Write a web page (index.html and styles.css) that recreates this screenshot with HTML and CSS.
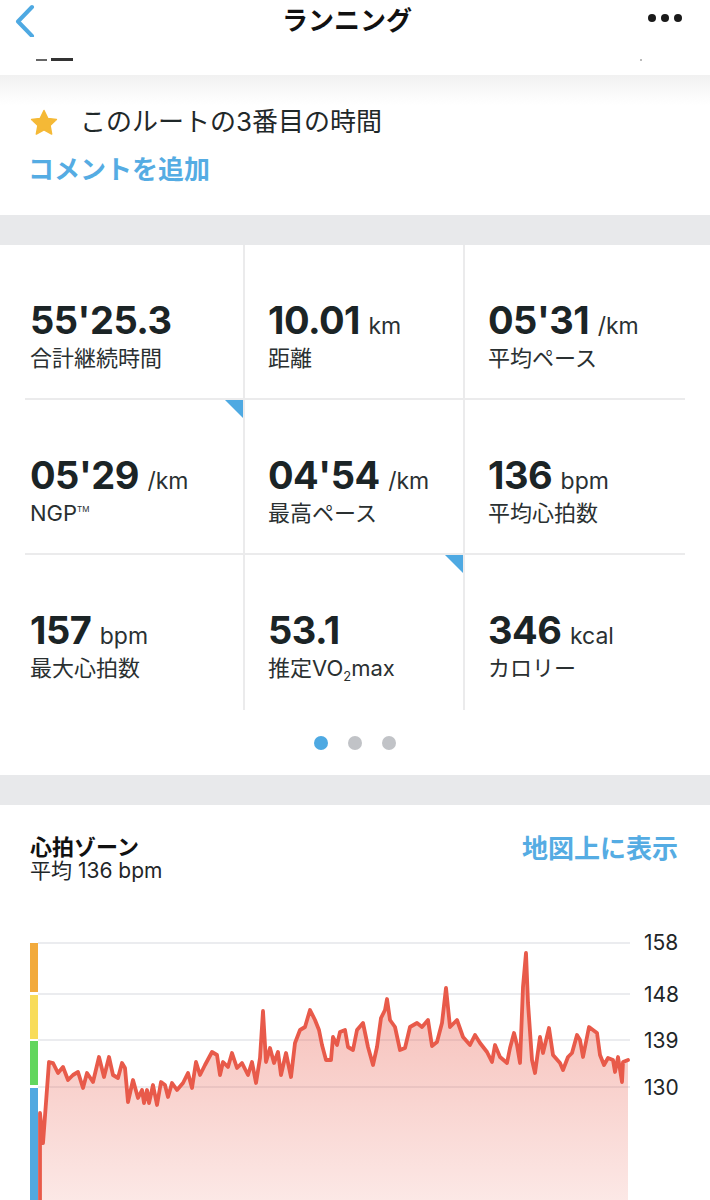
FILE: index.html
```html
<!DOCTYPE html>
<html lang="ja">
<head>
<meta charset="utf-8">
<title>ランニング</title>
<link rel="stylesheet" href="styles.css">
</head>
<body>
<header class="topbar">
  <svg class="back" width="24" height="34" viewBox="0 0 24 34"><polyline points="20,4 6,18.5 20,33" fill="none" stroke="#4ea9e2" stroke-width="4" stroke-linecap="round" stroke-linejoin="round"/></svg>
  <h1 class="title">ランニング</h1>
  <div class="more"><span></span><span></span><span></span></div>
</header>
<div class="clipped"><span class="c1"></span><span class="c2"></span><span class="c3"></span></div>
<section class="route">
  <div class="route-row">
    <svg class="star" width="30" height="28" viewBox="0 0 24 23"><path d="M12 1.2l3.1 6.5 7.1.9-5.2 4.9 1.3 7.1L12 17.2l-6.3 3.4 1.3-7.1L1.8 8.6l7.1-.9z" fill="#f5b936" stroke="#f5b936" stroke-width="1.2" stroke-linejoin="round"/></svg>
    <span class="route-text">このルートの3番目の時間</span>
  </div>
  <div class="add-comment">コメントを追加</div>
</section>
<div class="band"></div>
<section class="stats">
  <div class="grid">
    <div class="cell first"><div class="value">55'25.3</div><div class="label">合計継続時間</div></div>
    <div class="cell"><div class="value">10.01 <span class="unit">km</span></div><div class="label">距離</div></div>
    <div class="cell last"><div class="value">05'31 <span class="unit">/km</span></div><div class="label">平均ペース</div></div>
    <div class="cell first flag"><div class="value">05'29 <span class="unit">/km</span></div><div class="label">NGP<sup class="tm">TM</sup></div></div>
    <div class="cell"><div class="value">04'54 <span class="unit">/km</span></div><div class="label">最高ペース</div></div>
    <div class="cell last"><div class="value">136 <span class="unit">bpm</span></div><div class="label">平均心拍数</div></div>
    <div class="cell first bottom"><div class="value">157 <span class="unit">bpm</span></div><div class="label">最大心拍数</div></div>
    <div class="cell bottom flag"><div class="value">53.1</div><div class="label">推定VO<sub class="sub">2</sub>max</div></div>
    <div class="cell last bottom"><div class="value">346 <span class="unit">kcal</span></div><div class="label">カロリー</div></div>
  </div>
  <div class="pager"><span class="dot active"></span><span class="dot"></span><span class="dot"></span></div>
</section>
<div class="band"></div>
<section class="hr">
  <div class="hr-head">
    <div>
      <div class="hr-title">心拍ゾーン</div>
      <div class="hr-avg">平均 136 bpm</div>
    </div>
    <div class="map-link">地図上に表示</div>
  </div>
  <svg class="chart" width="710" height="280" viewBox="0 920 710 280">
    <defs>
      <linearGradient id="fillg" x1="0" y1="950" x2="0" y2="1200" gradientUnits="userSpaceOnUse">
        <stop offset="0" stop-color="#e85a4a" stop-opacity="0.44"/>
        <stop offset="1" stop-color="#e85a4a" stop-opacity="0.14"/>
      </linearGradient>
    </defs>
    <g stroke="#e5e6ea" stroke-width="1.6">
      <line x1="38" y1="943" x2="630" y2="943"/>
      <line x1="38" y1="994" x2="630" y2="994"/>
      <line x1="38" y1="1040" x2="630" y2="1040"/>
      <line x1="38" y1="1087" x2="630" y2="1087"/>
    </g>
    <rect x="30" y="943" width="8" height="49" fill="#f2aa3c"/>
    <rect x="30" y="995" width="8" height="44" fill="#f8dc5a"/>
    <rect x="30" y="1041" width="8" height="44" fill="#62d65e"/>
    <rect x="30" y="1088" width="8" height="112" fill="#51a9e0"/>
    <polygon fill="url(#fillg)" points="40,1200 40,1113 43,1143 49,1062 53,1063 58,1073 63,1067 68,1080 73,1075 78,1072 83,1088 87,1073 93,1082 99,1057 104,1077 109,1057 113,1075 118,1078 122,1063 125,1068 128,1102 133,1080 138,1098 142,1090 144,1103 147,1090 149,1103 153,1085 157,1105 161,1082 165,1085 168,1097 172,1083 177,1090 183,1083 188,1073 192,1088 196,1062 200,1075 205,1065 212,1052 217,1055 220,1075 223,1062 228,1067 232,1053 237,1068 242,1063 248,1075 252,1062 256,1083 260,1058 263,1011 266,1062 270,1048 274,1063 278,1052 281,1075 286,1053 291,1077 295,1043 300,1030 305,1027 310,1010 315,1020 319,1030 322,1045 326,1060 331,1060 333,1037 337,1045 340,1032 345,1030 348,1047 353,1050 357,1030 363,1023 368,1047 373,1065 377,1047 381,1018 385,1010 387,999 390,1020 395,1027 400,1050 405,1048 410,1027 417,1023 422,1027 428,1020 432,1046 437,1042 442,1023 446,988 450,1027 457,1020 463,1037 470,1045 475,1035 480,1043 487,1052 492,1062 495,1045 500,1057 507,1063 510,1048 514,1033 517,1045 520,1063 523,987 526,953 528,1003 532,1060 535,1073 540,1037 543,1053 549,1028 553,1055 560,1063 563,1070 568,1057 572,1053 577,1035 580,1040 583,1057 589,1027 593,1030 597,1033 600,1055 604,1065 608,1058 613,1060 615,1072 618,1057 622,1082 623,1062 628,1060 628,1200"/>
    <polyline fill="none" stroke="#e85a4a" stroke-width="3.8" stroke-linejoin="round" stroke-linecap="round" points="40,1200 40,1113 43,1143 49,1062 53,1063 58,1073 63,1067 68,1080 73,1075 78,1072 83,1088 87,1073 93,1082 99,1057 104,1077 109,1057 113,1075 118,1078 122,1063 125,1068 128,1102 133,1080 138,1098 142,1090 144,1103 147,1090 149,1103 153,1085 157,1105 161,1082 165,1085 168,1097 172,1083 177,1090 183,1083 188,1073 192,1088 196,1062 200,1075 205,1065 212,1052 217,1055 220,1075 223,1062 228,1067 232,1053 237,1068 242,1063 248,1075 252,1062 256,1083 260,1058 263,1011 266,1062 270,1048 274,1063 278,1052 281,1075 286,1053 291,1077 295,1043 300,1030 305,1027 310,1010 315,1020 319,1030 322,1045 326,1060 331,1060 333,1037 337,1045 340,1032 345,1030 348,1047 353,1050 357,1030 363,1023 368,1047 373,1065 377,1047 381,1018 385,1010 387,999 390,1020 395,1027 400,1050 405,1048 410,1027 417,1023 422,1027 428,1020 432,1046 437,1042 442,1023 446,988 450,1027 457,1020 463,1037 470,1045 475,1035 480,1043 487,1052 492,1062 495,1045 500,1057 507,1063 510,1048 514,1033 517,1045 520,1063 523,987 526,953 528,1003 532,1060 535,1073 540,1037 543,1053 549,1028 553,1055 560,1063 563,1070 568,1057 572,1053 577,1035 580,1040 583,1057 589,1027 593,1030 597,1033 600,1055 604,1065 608,1058 613,1060 615,1072 618,1057 622,1082 623,1062 628,1060"/>
    <g class="axis" font-size="21" fill="#1f2628">
      <text x="644" y="950">158</text>
      <text x="644" y="1002">148</text>
      <text x="644" y="1048">139</text>
      <text x="644" y="1095">130</text>
    </g>
  </svg>
</section>
</body>
</html>
```

FILE: styles.css
```css
* { box-sizing: border-box; }
html, body { margin: 0; padding: 0; background: #fff; }
body {
  width: 710px;
  height: 1200px;
  overflow: hidden;
  font-family: "Inter", "Noto Sans CJK JP", sans-serif;
  color: #1d2628;
}

.topbar {
  height: 38px;
  display: grid;
  grid-template-columns: 1fr auto 1fr;
  align-items: center;
  padding: 0 28px 0 12px;
}
.back { display: block; margin-top: 2px; }
.title {
  margin: 0;
  font-family: "Noto Sans CJK JP", sans-serif;
  font-size: 26px;
  font-weight: 700;
  line-height: 30px;
  color: #111;
}
.more { justify-self: end; display: flex; gap: 5px; margin-top: -2px; }
.more span { width: 8px; height: 8px; border-radius: 50%; background: #1a1a1a; }

.clipped {
  height: 37px;
  display: flex;
  align-items: flex-start;
  padding: 20px 0 0 36px;
}
.clipped span { display: block; }
.c1 { width: 11px; height: 2px; background: #666; margin-top: 1px; }
.c2 { width: 22px; height: 3px; background: #333; margin-left: 4px; }
.c3 { width: 2px; height: 2px; background: #bbb; margin-left: 567px; margin-top: 1px; }

.route {
  background: linear-gradient(to bottom, #f1f1f1 0px, #f8f8f8 14px, #fff 30px);
  padding: 32px 28px 32px 28px;
}
.route-row { display: flex; align-items: center; height: 30px; }
.star { display: block; margin-left: 1px; margin-top: 2px; }
.route-text {
  margin-left: 21px;
  font-size: 26px;
  line-height: 30px;
  color: #1f2829;
}
.add-comment {
  margin-top: 16px;
  font-family: "Noto Sans CJK JP", sans-serif;
  font-size: 26px;
  line-height: 30px;
  font-weight: 700;
  color: #55ace3;
}

.band { height: 30px; background: #e8e9eb; }

.grid {
  margin-left: 25px;
  width: 660px;
  display: grid;
  grid-template-columns: 220px 220px 220px;
}
.cell {
  position: relative;
  height: 155px;
  padding: 55px 0 0 23px;
  border-right: 2px solid #ebebec;
  border-bottom: 2px solid #ebebec;
}
.cell.first { padding-left: 5px; }
.cell.last { border-right: none; }
.cell.bottom { border-bottom: none; }
.cell.flag::after {
  content: "";
  position: absolute;
  top: 0;
  right: 0;
  width: 0;
  height: 0;
  border-top: 18px solid #4ea9e2;
  border-left: 18px solid transparent;
}
.value {
  height: 40px;
  font-size: 38px;
  line-height: 40px;
  font-weight: 700;
  letter-spacing: -0.5px;
  color: #1b2426;
  white-space: nowrap;
}
.unit {
  font-size: 23px;
  line-height: 0;
  font-weight: 400;
  letter-spacing: 0;
  color: #2a3133;
}
.label {
  margin-top: 4px;
  font-size: 22px;
  line-height: 28px;
  color: #2a3031;
}
.tm { font-size: 8px; vertical-align: 9px; line-height: 0; }
.sub { font-size: 13px; vertical-align: -5px; line-height: 0; }

.pager {
  height: 65px;
  display: flex;
  justify-content: center;
  align-items: center;
  gap: 20px;
  padding-top: 1px;
}
.dot { width: 14px; height: 14px; border-radius: 50%; background: #c1c3c7; }
.dot.active { background: #4ea9e2; }

.hr-head {
  display: flex;
  justify-content: space-between;
  align-items: flex-start;
  padding: 27px 32px 0 30px;
}
.hr-title {
  font-family: "Noto Sans CJK JP", sans-serif;
  font-size: 22px;
  line-height: 26px;
  font-weight: 700;
  color: #111;
}
.hr-avg {
  font-size: 21px;
  line-height: 26px;
  color: #1f2628;
}
.map-link {
  font-family: "Noto Sans CJK JP", sans-serif;
  font-size: 26px;
  line-height: 30px;
  font-weight: 700;
  color: #55ace3;
}
.chart { display: block; margin-top: 36px; }
.axis { font-family: "Inter", sans-serif; }
```
